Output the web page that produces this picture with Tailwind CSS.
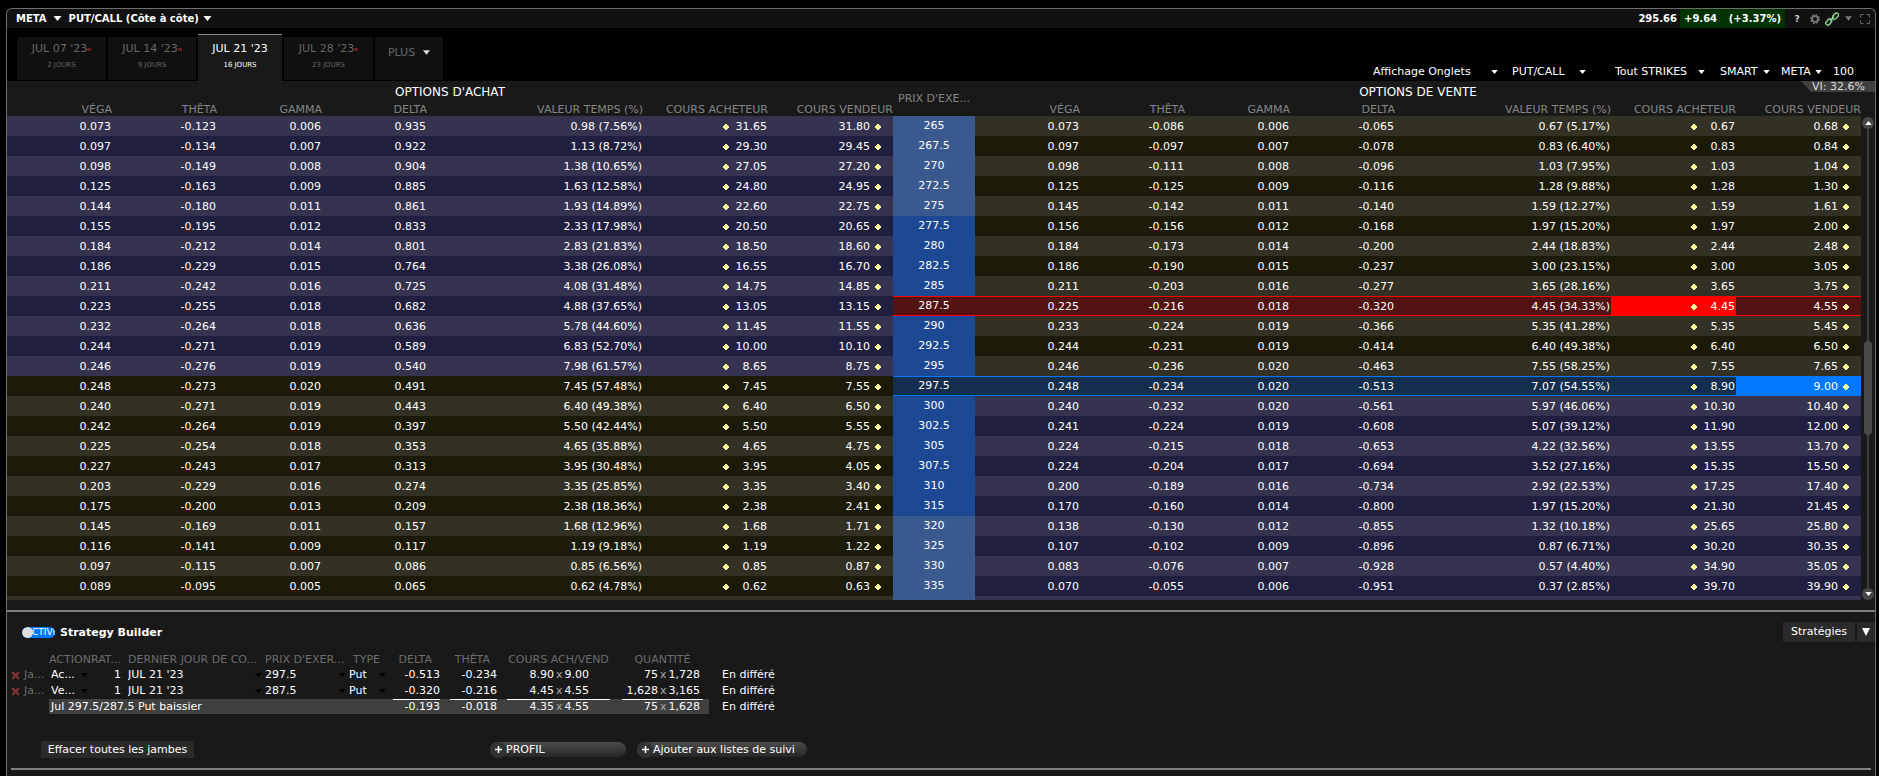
<!DOCTYPE html>
<html lang="fr">
<head>
  <meta charset="UTF-8" />
  <meta name="viewport" content="width=device-width, initial-scale=1.0" />
  <title>META - PUT/CALL</title>
  <script src="https://cdn.jsdelivr.net/npm/@tailwindcss/browser@4"></script>
</head>
<body class="bg-black text-white font-['DejaVu_Sans',sans-serif] text-[11px] leading-4 min-h-screen flex flex-col pt-2 pl-[6px] pr-[3px] overflow-hidden">
  <!-- icons shared by the controls -->
  <svg class="hidden">
    <symbol id="caret" viewBox="0 0 8 5"><path d="M0 0h8L4 5z" fill="currentColor" /></symbol>
    <symbol id="dot" viewBox="0 0 6 6"><path d="M2 0h2v1h1v1h1v2H5v1H4v1H2V5H1V4H0V2h1V1h1z" fill="#ffff99" /></symbol>
    <symbol id="cross" viewBox="0 0 8 8"><path d="M1 1l6 6M7 1L1 7" stroke="currentColor" stroke-width="2" /></symbol>
  </svg>

  <div class="flex-1 flex flex-col border border-b-0 border-[#6e6e6e] rounded-t-md bg-[#191919]">
    <header class="h-[19px] bg-[#111111] rounded-t-md flex items-center justify-between pl-[9px] text-[10px] font-bold">
      <div class="flex items-center">
        <button class="flex items-center gap-[6px] mr-[7px]">META <svg class="w-[9px] h-[5px]"><use href="#caret" /></svg></button>
        <button class="flex items-center gap-1">PUT/CALL (Côte à côte) <svg class="w-[9px] h-[5px]"><use href="#caret" /></svg></button>
      </div>
      <div class="flex items-center h-full">
        <span class="mr-[3px]">295.66</span>
        <span class="bg-[#003300] w-[105px] h-full flex items-center justify-between px-1 mr-[9px]"><span>+9.64</span><span>(+3.37%)</span></span>
        <button class="w-[6px] mr-[10px] text-[9px] text-[#cccccc]" aria-label="Aide">?</button>
        <button class="mr-[5px]" aria-label="Paramètres">
          <svg class="w-[10px] h-[10px]" viewBox="0 0 10 10" fill="none" stroke="#777777"><circle cx="5" cy="5" r="2.9" stroke-width="1.900" /><circle cx="5" cy="5" r="4.3" stroke-width="1.300" stroke-dasharray="1.900 1.477" /></svg>
        </button>
        <button class="mr-[6px]" aria-label="Lier">
          <svg class="w-[14px] h-[14px]" viewBox="0 0 14 14" fill="none" stroke="#8fdc8f" stroke-width="1.3"><rect x="7" y="2.2" width="7" height="4" rx="2" transform="rotate(-48 10.5 4.2)" /><rect x="0.3" y="8" width="7" height="4" rx="2" transform="rotate(-48 3.8 10)" /><path d="M5.2 8.8l3.6-3.8" /></svg>
        </button>
        <button class="mr-2" aria-label="Menu"><svg class="w-[7px] h-[5px] text-[#777777]"><use href="#caret" /></svg></button>
        <button class="mr-[5px]" aria-label="Agrandir">
          <svg class="w-[10px] h-[10px]" viewBox="0 0 10 10" fill="none" stroke="#666666"><path d="M.5 3.5v-3h3M6.500 .5h3v3M9.500 6.500v3h-3M3.500 9.500h-3v-3" /></svg>
        </button>
      </div>
    </header>

    <div class="h-[53px] bg-black flex items-end justify-between pl-[10px] pr-[18px]">
      <nav class="flex items-end gap-[2px] text-[#666666]">
        <a href="#" class="w-[89px] h-[43px] mb-px bg-[#101010] flex flex-col items-center pt-1">
          <span class="flex items-center">JUL 07 '23<i class="w-1 h-[3px] bg-[#5e2020]"></i></span><span class="text-[7px]">2 JOURS</span>
        </a>
        <a href="#" class="w-[88px] h-[43px] mb-px bg-[#101010] flex flex-col items-center pt-1">
          <span class="flex items-center">JUL 14 '23<i class="w-1 h-[3px] bg-[#5e2020]"></i></span><span class="text-[7px]">9 JOURS</span>
        </a>
        <a href="#" class="w-[84px] h-[47px] bg-[#191919] border-t border-[#888888] text-white flex flex-col items-center pt-[6px]">
          <span>JUL 21 '23</span><span class="text-[7px]">16 JOURS</span>
        </a>
        <a href="#" class="w-[89px] h-[43px] mb-px bg-[#101010] flex flex-col items-center pt-1">
          <span class="flex items-center">JUL 28 '23<i class="w-1 h-[3px] bg-[#5e2020]"></i></span><span class="text-[7px]">23 JOURS</span>
        </a>
        <button class="w-[68px] h-[43px] mb-px bg-[#101010] flex items-center justify-center gap-2 pb-3">PLUS <svg class="w-[7px] h-[5px] text-[#dddddd]"><use href="#caret" /></svg></button>
      </nav>
      <div class="flex items-center pb-px">
        <label class="flex items-center mr-[14px]"><select class="appearance-none w-[118px]" aria-label="Affichage"><option>Affichage Onglets</option></select><svg class="w-[7px] h-1"><use href="#caret" /></svg></label>
        <label class="flex items-center mr-[29px]"><select class="appearance-none w-[67px]" aria-label="Type"><option>PUT/CALL</option></select><svg class="w-[7px] h-1"><use href="#caret" /></svg></label>
        <label class="flex items-center mr-[15px]"><select class="appearance-none w-[83px]" aria-label="Strikes"><option>Tout STRIKES</option></select><svg class="w-[7px] h-1"><use href="#caret" /></svg></label>
        <label class="flex items-center mr-[11px]"><select class="appearance-none w-[43px]" aria-label="Bourse"><option>SMART</option></select><svg class="w-[7px] h-1"><use href="#caret" /></svg></label>
        <label class="flex items-center mr-[11px]"><select class="appearance-none w-[34px]" aria-label="Classe"><option>META</option></select><svg class="w-[7px] h-1"><use href="#caret" /></svg></label>
        <input type="text" value="100" aria-label="Multiplicateur" class="w-6 bg-transparent outline-none" />
      </div>
    </div>

    <section class="relative flex">
      <div class="absolute right-0 top-0 h-[11px] w-[74px] pr-[10px] bg-[#404040] text-right leading-[11px] text-[#dddddd] [clip-path:polygon(0_0,100%_0,100%_100%,10px_100%)]">VI: 32.6%</div>
      <table class="flex-1 table-fixed border-separate border-spacing-0 whitespace-nowrap">
        <colgroup>
          <col class="w-[105px]" /><col class="w-[105px]" /><col class="w-[105px]" /><col class="w-[105px]" /><col class="w-[216px]" /><col class="w-[125px]" /><col class="w-[125px]" />
          <col class="w-[82px]" />
          <col class="w-[105px]" /><col class="w-[105px]" /><col class="w-[105px]" /><col class="w-[105px]" /><col class="w-[216px]" /><col class="w-[125px]" /><col class="w-[125px]" />
        </colgroup>
        <thead class="text-[#858585]">
          <tr class="h-5">
            <th colspan="7" class="p-0 pt-[2px] text-[12px] font-medium text-white text-center">OPTIONS D'ACHAT</th>
            <th rowspan="2" class="p-0 font-normal text-center">PRIX D'EXE...</th>
            <th colspan="7" class="p-0 pt-[2px] text-[12px] font-medium text-white text-center">OPTIONS DE VENTE</th>
          </tr>
          <tr class="h-[15px] leading-[13px] text-right">
            <th class="p-0 pt-[2px] font-normal">VÉGA</th><th class="p-0 pt-[2px] font-normal">THÊTA</th><th class="p-0 pt-[2px] font-normal">GAMMA</th><th class="p-0 pt-[2px] font-normal">DELTA</th><th class="p-0 pt-[2px] font-normal">VALEUR TEMPS (%)</th><th class="p-0 pt-[2px] font-normal">COURS ACHETEUR</th><th class="p-0 pt-[2px] font-normal">COURS VENDEUR</th>
            <th class="p-0 pt-[2px] font-normal">VÉGA</th><th class="p-0 pt-[2px] font-normal">THÊTA</th><th class="p-0 pt-[2px] font-normal">GAMMA</th><th class="p-0 pt-[2px] font-normal">DELTA</th><th class="p-0 pt-[2px] font-normal">VALEUR TEMPS (%)</th><th class="p-0 pt-[2px] font-normal">COURS ACHETEUR</th><th class="p-0 pt-[2px] font-normal">COURS VENDEUR</th>
          </tr>
        </thead>
        <tbody id="chain" class="text-right leading-4"></tbody>
      </table>
      <div class="w-[14px] pt-9 flex flex-col items-center">
        <button aria-label="Haut" class="size-3 rounded-full bg-[#484848] flex items-center justify-center"><svg class="w-[7px] h-1 rotate-180"><use href="#caret" /></svg></button>
        <div class="relative flex-1 w-[2px] bg-[#3c3c3c]"><div class="absolute top-[212px] -left-[3px] w-2 h-[94px] rounded-full bg-[#4a4a4a]"></div></div>
        <button aria-label="Bas" class="size-3 rounded-full bg-[#484848] flex items-center justify-center"><svg class="w-[7px] h-1"><use href="#caret" /></svg></button>
      </div>
    </section>

    <section class="mt-[10px] border-t-2 border-[#808080] flex-1 flex flex-col">
      <div class="flex items-center justify-between h-5 mt-[10px] pl-[15px]">
        <div class="flex items-center gap-[5px]">
          <button role="switch" aria-checked="true" aria-label="Strategy Builder" class="relative w-[33px] h-[11px] rounded-full bg-[#0078ff] text-[9px] leading-[11px] pl-[10px] overflow-hidden text-left"><span class="absolute left-0 top-0 size-[11px] rounded-full bg-[#dddddd]"></span>CTIVÉ</button>
          <h2 class="font-bold pt-px">Strategy Builder</h2>
        </div>
        <div class="flex gap-[2px]">
          <button class="h-5 w-[72px] bg-[#2a2a2a]">Stratégies</button>
          <button aria-label="Liste" class="h-5 w-[18px] bg-[#2a2a2a] flex items-center justify-center"><svg class="w-2 h-2" viewBox="0 0 8 8"><path d="M0 0h8L4 8z" fill="#fff" /></svg></button>
        </div>
      </div>

      <table class="mt-[10px] w-[779px] table-fixed border-separate border-spacing-0 whitespace-nowrap text-left">
        <colgroup>
          <col class="w-[17px]" /><col class="w-[25px]" /><col class="w-[42px]" /><col class="w-[37px]" /><col class="w-[137px]" /><col class="w-[84px]" /><col class="w-[44px]" /><col class="w-[47px]" /><col class="w-[57px]" /><col class="w-[113px]" /><col class="w-[99px]" /><col />
        </colgroup>
        <thead class="text-[#6c6c6c]">
          <tr class="h-[15px] leading-[15px]">
            <th class="p-0"></th><th class="p-0"></th><th class="p-0 font-normal">ACTION</th><th class="p-0 font-normal">RAT...</th><th class="p-0 font-normal">DERNIER JOUR DE CO...</th><th class="p-0 font-normal">PRIX D'EXER...</th><th class="p-0 pl-1 font-normal">TYPE</th><th class="p-0 pr-[8px] font-normal text-right">DELTA</th><th class="p-0 pr-[7px] font-normal text-right">THÊTA</th><th class="p-0 pl-[10px] font-normal text-center">COURS ACH/VEND</th><th class="p-0 pl-3 pr-[6px] font-normal text-center">QUANTITÉ</th><th class="p-0"></th>
          </tr>
        </thead>
        <tbody id="legs"></tbody>
        <tfoot>
          <tr class="h-[15px] leading-[14px]">
            <td colspan="2" class="p-0"></td>
            <td colspan="5" class="p-0 pl-[2px] bg-[#404040]">Jul 297.5/287.5 Put baissier</td>
            <td class="p-0 bg-[#404040] text-right"><div class="border-t border-white">-0.193</div></td>
            <td class="p-0 pl-[10px] bg-[#404040] text-right"><div class="border-t border-white">-0.018</div></td>
            <td class="p-0 pl-[10px] bg-[#404040]"><div class="border-t border-white pr-[21px] text-right">4.35<span class="text-[#aaaaaa] px-[2px]">x</span>4.55</div></td>
            <td class="p-0 pl-3 pr-[6px] bg-[#404040]"><div class="border-t border-white pr-[3px] text-right">75<span class="text-[#aaaaaa] px-[2px]">x</span>1,628</div></td>
            <td class="p-0 pl-[13px]">En différé</td>
          </tr>
        </tfoot>
      </table>

      <div class="flex items-center pl-[34px] mt-[27px]">
        <button class="h-[17px] w-[153px] bg-[#2a2a2a]">Effacer toutes les jambes</button>
        <button class="ml-[296px] w-[136px] h-[15px] rounded-full bg-linear-to-b from-[#4c4c4c] to-[#262626] flex items-center pr-2"><span class="size-4 shrink-0 rounded-full bg-[#333333] flex items-center justify-center"><svg class="size-[7px]" viewBox="0 0 7 7"><path d="M3.500 0v7M0 3.500h7" stroke="#fff" stroke-width="1.500" /></svg></span>PROFIL</button>
        <button class="ml-[11px] w-[170px] h-[15px] rounded-full bg-linear-to-b from-[#4c4c4c] to-[#262626] flex items-center pr-[6px]"><span class="size-4 shrink-0 rounded-full bg-[#333333] flex items-center justify-center"><svg class="size-[7px]" viewBox="0 0 7 7"><path d="M3.500 0v7M0 3.500h7" stroke="#fff" stroke-width="1.500" /></svg></span>Ajouter aux listes de suivi</button>
      </div>
      <div class="mt-auto mx-1 mb-[6px] h-[2px] bg-[#808080]"></div>
    </section>
  </div>

  <script>
    // call: vega theta gamma delta time% bid ask | strike | put: same columns
    const rows = `
0.073 -0.123 0.006 0.935 0.98 (7.56%) 31.65 31.80|265|0.073 -0.086 0.006 -0.065 0.67 (5.17%) 0.67 0.68
0.097 -0.134 0.007 0.922 1.13 (8.72%) 29.30 29.45|267.5|0.097 -0.097 0.007 -0.078 0.83 (6.40%) 0.83 0.84
0.098 -0.149 0.008 0.904 1.38 (10.65%) 27.05 27.20|270|0.098 -0.111 0.008 -0.096 1.03 (7.95%) 1.03 1.04
0.125 -0.163 0.009 0.885 1.63 (12.58%) 24.80 24.95|272.5|0.125 -0.125 0.009 -0.116 1.28 (9.88%) 1.28 1.30
0.144 -0.180 0.011 0.861 1.93 (14.89%) 22.60 22.75|275|0.145 -0.142 0.011 -0.140 1.59 (12.27%) 1.59 1.61
0.155 -0.195 0.012 0.833 2.33 (17.98%) 20.50 20.65|277.5|0.156 -0.156 0.012 -0.168 1.97 (15.20%) 1.97 2.00
0.184 -0.212 0.014 0.801 2.83 (21.83%) 18.50 18.60|280|0.184 -0.173 0.014 -0.200 2.44 (18.83%) 2.44 2.48
0.186 -0.229 0.015 0.764 3.38 (26.08%) 16.55 16.70|282.5|0.186 -0.190 0.015 -0.237 3.00 (23.15%) 3.00 3.05
0.211 -0.242 0.016 0.725 4.08 (31.48%) 14.75 14.85|285|0.211 -0.203 0.016 -0.277 3.65 (28.16%) 3.65 3.75
0.223 -0.255 0.018 0.682 4.88 (37.65%) 13.05 13.15|287.5|0.225 -0.216 0.018 -0.320 4.45 (34.33%) 4.45 4.55
0.232 -0.264 0.018 0.636 5.78 (44.60%) 11.45 11.55|290|0.233 -0.224 0.019 -0.366 5.35 (41.28%) 5.35 5.45
0.244 -0.271 0.019 0.589 6.83 (52.70%) 10.00 10.10|292.5|0.244 -0.231 0.019 -0.414 6.40 (49.38%) 6.40 6.50
0.246 -0.276 0.019 0.540 7.98 (61.57%) 8.65 8.75|295|0.246 -0.236 0.020 -0.463 7.55 (58.25%) 7.55 7.65
0.248 -0.273 0.020 0.491 7.45 (57.48%) 7.45 7.55|297.5|0.248 -0.234 0.020 -0.513 7.07 (54.55%) 8.90 9.00
0.240 -0.271 0.019 0.443 6.40 (49.38%) 6.40 6.50|300|0.240 -0.232 0.020 -0.561 5.97 (46.06%) 10.30 10.40
0.242 -0.264 0.019 0.397 5.50 (42.44%) 5.50 5.55|302.5|0.241 -0.224 0.019 -0.608 5.07 (39.12%) 11.90 12.00
0.225 -0.254 0.018 0.353 4.65 (35.88%) 4.65 4.75|305|0.224 -0.215 0.018 -0.653 4.22 (32.56%) 13.55 13.70
0.227 -0.243 0.017 0.313 3.95 (30.48%) 3.95 4.05|307.5|0.224 -0.204 0.017 -0.694 3.52 (27.16%) 15.35 15.50
0.203 -0.229 0.016 0.274 3.35 (25.85%) 3.35 3.40|310|0.200 -0.189 0.016 -0.734 2.92 (22.53%) 17.25 17.40
0.175 -0.200 0.013 0.209 2.38 (18.36%) 2.38 2.41|315|0.170 -0.160 0.014 -0.800 1.97 (15.20%) 21.30 21.45
0.145 -0.169 0.011 0.157 1.68 (12.96%) 1.68 1.71|320|0.138 -0.130 0.012 -0.855 1.32 (10.18%) 25.65 25.80
0.116 -0.141 0.009 0.117 1.19 (9.18%) 1.19 1.22|325|0.107 -0.102 0.009 -0.896 0.87 (6.71%) 30.20 30.35
0.097 -0.115 0.007 0.086 0.85 (6.56%) 0.85 0.87|330|0.083 -0.076 0.007 -0.928 0.57 (4.40%) 34.90 35.05
0.089 -0.095 0.005 0.065 0.62 (4.78%) 0.62 0.63|335|0.070 -0.055 0.006 -0.951 0.37 (2.85%) 39.70 39.90`.trim().split('\n');

    const dot = '<svg class="size-[6px] shrink-0"><use href="#dot" /></svg>';
    const itm = ['bg-[#353350]', 'bg-[#211f3f]'];
    const otm = ['bg-[#323124]', 'bg-[#1c1b0a]'];
    const marks = {
      '287.5': { row: 'border-y border-[#ff0000] bg-[#521212]', bid: 'border-y border-[#ff0000] bg-[#ff0000]' },
      '297.5': { row: 'border-y border-[#0078ff] bg-[#132e4e]', ask: 'border-y border-[#0078ff] bg-[#0078ff]' }
    };

    function side(text, bg, mark) {
      const v = text.split(' ');
      const cells = [v[0], v[1], v[2], v[3], v[4] + ' ' + v[5]];
      const rest = mark ? mark.row : bg;
      return cells.map(c => `<td class="p-0 pt-[2px] pr-px ${rest}">${c}</td>`).join('') +
        `<td class="p-0 pt-[2px] pr-px ${(mark && mark.bid) || rest}"><div class="flex items-center justify-end">${dot}<span class="w-[38px]">${v[6]}</span></div></td>` +
        `<td class="p-0 pt-[2px] pr-3 ${(mark && mark.ask) || rest}"><div class="flex items-center justify-end gap-[5px]">${v[7]}${dot}</div></td>`;
    }

    let html = '';
    rows.forEach((line, i) => {
      const [call, strike, put] = line.split('|');
      const callBg = (i < 13 ? itm : otm)[i % 2];
      const putBg = (i < 13 ? otm : itm)[i % 2];
      const strikeBg = i < 5 || i > 19 ? 'bg-[#39598f]' : 'bg-[#1c4894]';
      const mark = marks[strike];
      html += `<tr class="h-5">${side(call, callBg)}<td class="p-0 text-center ${mark ? mark.row : strikeBg}">${strike}</td>${side(put, putBg, mark)}</tr>`;
    });
    // top edge of the next row, cut by the viewport
    html += '<tr class="h-1"><td colspan="7" class="p-0 bg-[#323124]"></td><td class="p-0 bg-[#39598f]"></td><td colspan="7" class="p-0 bg-[#353350]"></td></tr>';
    document.getElementById('chain').innerHTML = html;

    const pick = (value, label) => `<label class="flex items-center justify-between pr-[3px]"><select aria-label="${label}" class="appearance-none leading-4">` +
      `<option>${value}</option></select><svg class="w-[7px] h-1 text-black"><use href="#caret" /></svg></label>`;
    const legs = [
      ['Ac...', '297.5', '-0.513', '-0.234', '8.90', '9.00', '75', '1,728'],
      ['Ve...', '287.5', '-0.320', '-0.216', '4.45', '4.55', '1,628', '3,165']
    ];
    document.getElementById('legs').innerHTML = legs.map(l => `
      <tr class="h-4">
        <td class="p-0 pl-1"><button aria-label="Supprimer" class="block text-[#7d3535]"><svg class="size-[9px]"><use href="#cross" /></svg></button></td>
        <td class="p-0 text-[#6c6c6c]">Ja...</td>
        <td class="p-0 pl-[2px]">${pick(l[0], 'Action')}</td>
        <td class="p-0 pr-[7px]"><input type="text" value="1" aria-label="Ratio" class="block w-full bg-transparent text-right outline-none" /></td>
        <td class="p-0">${pick("JUL 21 '23", 'Dernier jour')}</td>
        <td class="p-0">${pick(l[1], "Prix d'exercice")}</td>
        <td class="p-0 pr-1">${pick('Put', 'Type')}</td>
        <td class="p-0 text-right">${l[2]}</td>
        <td class="p-0 text-right">${l[3]}</td>
        <td class="p-0 pr-[21px] text-right">${l[4]}<span class="text-[#aaaaaa] px-[2px]">x</span>${l[5]}</td>
        <td class="p-0 pr-[9px] text-right">${l[6]}<span class="text-[#aaaaaa] px-[2px]">x</span>${l[7]}</td>
        <td class="p-0 pl-[13px]">En différé</td>
      </tr>`).join('');
  </script>
</body>
</html>
